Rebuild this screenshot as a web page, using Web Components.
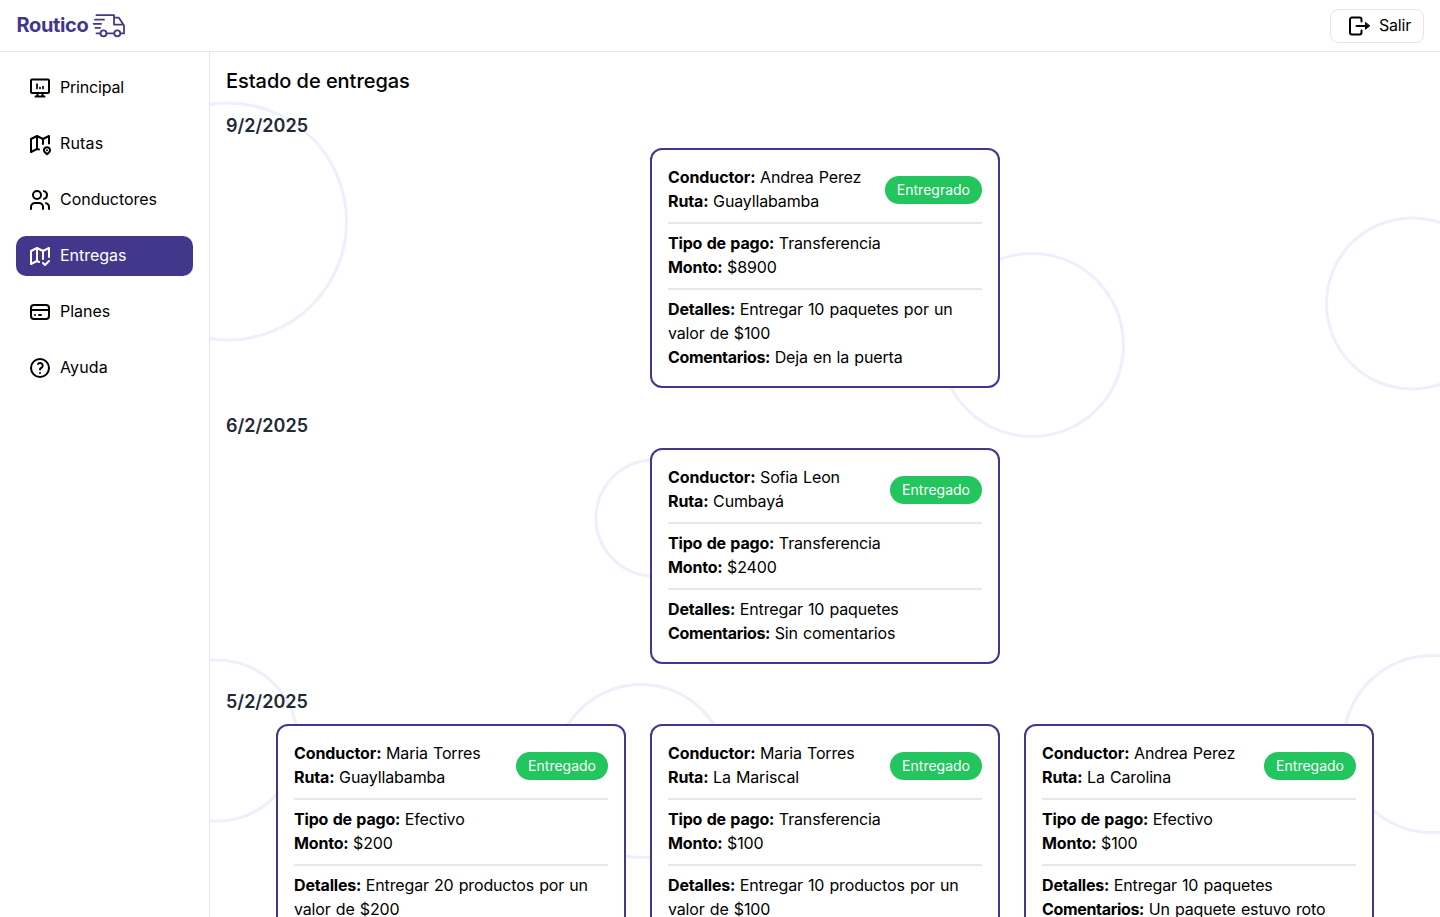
<!DOCTYPE html>
<html lang="es">
<head>
<meta charset="utf-8">
<title>Routico</title>
<style>
html,body{margin:0;height:100%;overflow:hidden;background:#fff}
body{font-family:Inter,"Open Sans",sans-serif;font-size:16px;line-height:24px;color:#000}
</style>
</head>
<body>
<routico-app></routico-app>
<script>
const define = (name, html, setup) => customElements.define(name, class extends HTMLElement {
  connectedCallback() {
    if (this.shadowRoot) return;
    this.attachShadow({mode: 'open'}).innerHTML = typeof html === 'function' ? html(this) : html;
    if (setup) setup(this);
  }
});

const icons = {
  principal: '<path d="M3 4.500a1 1 0 0 1 1-1h16a1 1 0 0 1 1 1v11.500a1 1 0 0 1-1 1H4a1 1 0 0 1-1-1zM7.500 20.500h9M9.500 17v3.500M14.500 17v3.500"/><path stroke-width="1.700" d="M9 12.500v-4.500M12 12.500v-1M15 12.500v-2"/>',
  rutas: '<path d="M11 17.500 9 17l-6 3V7l6-3 6 3 6-3v7.500M9 4v13M15 7v5"/><path d="M21.100 20.300a3 3 0 1 0-4.200 0l2.100 2zM19 18.200v.01"/>',
  conductores: '<path d="M5 7a4 4 0 1 0 8 0 4 4 0 1 0-8 0M3 21v-2a4 4 0 0 1 4-4h4a4 4 0 0 1 4 4v2M16 3.130a4 4 0 0 1 0 7.750M21 21v-2a4 4 0 0 0-3-3.850"/>',
  entregas: '<path d="M11 18l-2-1-6 3V7l6-3 6 3 6-3v9M9 4v13M15 7v8M15 19l2 2 4-4"/>',
  planes: '<path d="M3 8a3 3 0 0 1 3-3h12a3 3 0 0 1 3 3v8a3 3 0 0 1-3 3H6a3 3 0 0 1-3-3zM3 10h18M7 15h.01M11 15h2"/>',
  ayuda: '<path d="M3 12a9 9 0 1 0 18 0 9 9 0 1 0-18 0M12 17v.01M12 13.500a1.500 1.500 0 0 1 1-1.500 2.600 2.600 0 1 0-3-4"/>',
  salir: '<path d="M14.500 7.500V5.500a2 2 0 0 0-2-2h-7.500a2 2 0 0 0-2 2v13a2 2 0 0 0 2 2h7.500a2 2 0 0 0 2-2v-2M9.500 12h11"/><path fill="currentColor" stroke-width="1" d="M18.500 8.800v6.400L22.500 12z"/>'
};

define('app-icon', el => `<style>:host{display:block;width:24px;height:24px;flex:none}svg{display:block}</style>
<svg width="24" height="24" viewBox="0 0 24 24" fill="none" stroke="currentColor" stroke-width="2" stroke-linecap="round" stroke-linejoin="round">${icons[el.getAttribute('name')]}</svg>`);

define('app-logo', `<style>:host{display:flex;align-items:center;gap:4px;color:#43378c;font-size:20px;line-height:28px;font-weight:700;letter-spacing:-.35px}span{margin:-1px 0 1px .5px}svg{display:block}</style>
<span>Routico</span>
<svg width="34" height="26" viewBox="0 0 34 26" fill="none" stroke="currentColor" stroke-width="1.800" stroke-linejoin="round" stroke-linecap="round"><path d="M4.500 2.200h17.500v2.400h4.700l5.300 8v7.800h-3.200M3 6.700H12M1.600 10.800H9.200M3.500 14.900H8M4.500 20.300h4M14.500 20.300h7.500M22 4.600v7h9"/><circle cx="11.500" cy="20.300" r="3"/><circle cx="25.300" cy="20.300" r="3"/></svg>`);

define('app-header', `<style>:host{display:flex;justify-content:space-between;align-items:center;box-sizing:border-box;height:52px;padding:0 16px;border-bottom:1px solid #e5e7eb;background:#fff}
button{display:flex;align-items:center;gap:8px;box-sizing:border-box;height:34px;width:94px;padding:0 0 0 16px;border:1px solid #e5e7eb;border-radius:8px;background:#fff;font:inherit;color:inherit;letter-spacing:-.2px}button span{margin:-1px 0 1px}</style>
<app-logo></app-logo><button><app-icon name="salir"></app-icon><span>Salir</span></button>`);

define('nav-item', el => `<style>:host{display:flex;align-items:center;gap:8px;height:40px;padding:0 12px;border-radius:10px;letter-spacing:-.03px}:host([icon=principal]){letter-spacing:-.2px}:host([icon=rutas]),:host([icon=ayuda]){letter-spacing:.15px}:host([active]){background:#43378c;color:#fff}span{margin:-1px 0 1px}</style>
<app-icon name="${el.getAttribute('icon')}"></app-icon><span><slot></slot></span>`);

define('side-nav', `<style>:host{display:flex;flex-direction:column;gap:16px;box-sizing:border-box;width:210px;padding:16px;border-right:1px solid #e5e7eb;background:#fff}</style>
<nav-item icon="principal">Principal</nav-item><nav-item icon="rutas">Rutas</nav-item><nav-item icon="conductores">Conductores</nav-item><nav-item icon="entregas" active>Entregas</nav-item><nav-item icon="planes">Planes</nav-item><nav-item icon="ayuda">Ayuda</nav-item>`);

define('delivery-card', el => {
  const a = n => el.getAttribute(n);
  return `<style>:host{display:block;box-sizing:border-box;width:350px;padding:15px 16px 17px;border:2px solid #43378c;border-radius:12px;background:#fff;letter-spacing:-.15px;word-spacing:.8px}
.top{display:flex;justify-content:space-between;align-items:center}
section{padding-bottom:9px;margin-bottom:7px;border-bottom:2px solid #e5e7eb}
section:last-child{border:0;margin:0;padding-bottom:8px}
:host>section:last-child{padding-bottom:0}
b{font-weight:700;letter-spacing:-.17px;margin-right:-.6px}
b.l{letter-spacing:-.1px}b.c{letter-spacing:-.33px}
.badge{background:#22c55e;color:#fff;font-size:14px;line-height:20px;padding:4px 12px;border-radius:14px;letter-spacing:0;margin:1px 0 -1px}</style>
<section class="top"><div><div><b class="l">Conductor:</b> ${a('driver')}</div><div><b class="l">Ruta:</b> ${a('route')}</div></div><span class="badge">${a('status') || 'Entregado'}</span></section>
<section><div><b>Tipo de pago:</b> ${a('pay')}</div><div><b>Monto:</b> ${a('amount')}</div></section>
<section><div><b>Detalles:</b> ${a('details')}</div><div><b class="c">Comentarios:</b> ${a('comments')}</div></section>`;
});

define('delivery-day', el => `<style>:host{display:block;margin-bottom:24px}h2{margin:0 0 8px;font-size:18px;line-height:28px;font-weight:600;color:#1f2937}.cards{display:flex;justify-content:center;align-items:flex-start;gap:24px}</style>
<h2>${el.getAttribute('date')}</h2><div class="cards"><slot></slot></div>`);

define('circle-backdrop', `<style>:host{display:block;position:absolute;inset:0;z-index:0}svg{display:block}</style>
<svg width="1230" height="865" viewBox="210 52 1230 865" fill="none" stroke="#f0eefd" stroke-width="3"><circle cx="228" cy="221.500" r="118.500"/><circle cx="1032" cy="345" r="91.500"/><circle cx="1412" cy="303.500" r="85.500"/><circle cx="654" cy="518" r="58"/><circle cx="217" cy="740.500" r="80.500"/><circle cx="641" cy="771" r="86.500"/><circle cx="1432" cy="744" r="88.500"/></svg>`);

define('routico-app', `<style>:host{display:grid;grid-template:52px 865px / 210px 1fr;height:917px}
app-header{grid-column:1/-1}
main{position:relative;overflow:hidden;padding:15px 16px 0;box-sizing:border-box}
.content{position:relative}
h1{margin:0 0 17px;font-size:20px;line-height:28px;font-weight:500;letter-spacing:-.04px}</style>
<app-header></app-header><side-nav></side-nav>
<main><circle-backdrop></circle-backdrop><div class="content"><h1>Estado de entregas</h1>
<delivery-day date="9/2/2025"><delivery-card driver="Andrea Perez" route="Guayllabamba" status="Entregrado" pay="Transferencia" amount="$8900" details="Entregar 10 paquetes por un valor de $100" comments="Deja en la puerta"></delivery-card></delivery-day>
<delivery-day date="6/2/2025"><delivery-card driver="Sofia Leon" route="Cumbayá" pay="Transferencia" amount="$2400" details="Entregar 10 paquetes" comments="Sin comentarios"></delivery-card></delivery-day>
<delivery-day date="5/2/2025"><delivery-card driver="Maria Torres" route="Guayllabamba" pay="Efectivo" amount="$200" details="Entregar 20 productos por un valor de $200" comments="Sin comentarios"></delivery-card><delivery-card driver="Maria Torres" route="La Mariscal" pay="Transferencia" amount="$100" details="Entregar 10 productos por un valor de $100" comments="Sin comentarios"></delivery-card><delivery-card driver="Andrea Perez" route="La Carolina" pay="Efectivo" amount="$100" details="Entregar 10 paquetes" comments="Un paquete estuvo roto"></delivery-card></delivery-day>
</div></main>`);
</script>
</body>
</html>
